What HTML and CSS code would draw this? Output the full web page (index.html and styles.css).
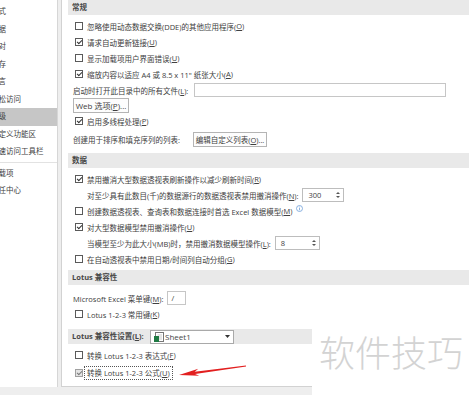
FILE: index.html
```html
<html lang="zh-CN">
<head>
    <meta charset="UTF-8">
    <title>Excel 选项 - 高级</title>
    <link rel="stylesheet" href="styles.css">
</head>
<body>
    <div class="dialog">
        <div class="sidenav">
            <div class="item">公式</div>
            <div class="item">数据</div>
            <div class="item">校对</div>
            <div class="item">保存</div>
            <div class="item">语言</div>
            <div class="item">轻松访问</div>
            <div class="item active">高级</div>
            <div class="item">自定义功能区</div>
            <div class="item">快速访问工具栏</div>
            <div class="sep"></div>
            <div class="item">加载项</div>
            <div class="item">信任中心</div>
        </div>

        <div class="panel">
            <div class="band first">常规</div>
            <div class="row"><span class="cb"></span>忽略使用动态数据交换(DDE)的其他应用程序(<u>O</u>)</div>
            <div class="row"><span class="cb on"></span>请求自动更新链接(<u>U</u>)</div>
            <div class="row"><span class="cb"></span>显示加载项用户界面错误(<u>U</u>)</div>
            <div class="row"><span class="cb on"></span>缩放内容以适应 A4 或 8.5 x 11" 纸张大小(<u>A</u>)</div>
            <div class="row plain">
                <span class="lbl lbl-file">启动时打开此目录中的所有文件(<u>L</u>):</span>
                <span class="field field-file"></span>
            </div>
            <div class="row plain btn-row">
                <span class="btn btn-web">Web 选项(<u>P</u>)...</span>
            </div>
            <div class="row"><span class="cb on"></span>启用多线程处理(<u>P</u>)</div>
            <div class="row plain list-row">
                <span class="lbl lbl-list">创建用于排序和填充序列的列表:</span>
                <span class="btn btn-list">编辑自定义列表(<u>O</u>)...</span>
            </div>

            <div class="band data-band">数据</div>
            <div class="row"><span class="cb on"></span>禁用撤消大型数据透视表刷新操作以减少刷新时间(<u>R</u>)</div>
            <div class="row indent">
                <span class="lbl">对至少具有此数目(千)的数据源行的数据透视表禁用撤消操作(<u>N</u>):</span>
                <span class="spin spin-300"><span>300</span><svg width="4" height="8" viewBox="0 0 4 8"><path d="M0 3 L2 1 L4 3 Z M0 5 L2 7 L4 5 Z" fill="#555"/></svg></span>
            </div>
            <div class="row"><span class="cb"></span>创建数据透视表、查询表和数据连接时首选 Excel 数据模型(<u>M</u>)
                <svg class="info" width="7" height="7" viewBox="0 0 7 7"><circle cx="3.5" cy="3.5" r="3" fill="none" stroke="#6f9fd8" stroke-width="0.8"/><rect x="3.1" y="3" width="0.8" height="2.3" fill="#6f9fd8"/><rect x="3.1" y="1.6" width="0.8" height="0.8" fill="#6f9fd8"/></svg>
            </div>
            <div class="row"><span class="cb on"></span>对大型数据模型禁用撤消操作(<u>U</u>)</div>
            <div class="row indent">
                <span class="lbl">当模型至少为此大小(MB)时，禁用撤消数据模型操作(<u>L</u>):</span>
                <span class="spin spin-8"><span>8</span><svg width="4" height="8" viewBox="0 0 4 8"><path d="M0 3 L2 1 L4 3 Z M0 5 L2 7 L4 5 Z" fill="#555"/></svg></span>
            </div>
            <div class="row"><span class="cb"></span>在自动透视表中禁用日期/时间列自动分组(<u>G</u>)</div>

            <div class="band lotus-band">Lotus 兼容性</div>
            <div class="row plain menu-row">
                <span class="lbl">Microsoft Excel 菜单键(<u>M</u>):</span>
                <span class="field field-key">/</span>
            </div>
            <div class="row"><span class="cb"></span>Lotus 1-2-3 常用键(<u>K</u>)</div>

            <div class="band lotus-set">
                <span class="lbl lbl-set">Lotus 兼容性设置(<u>L</u>):</span>
                <span class="combo">
                    <svg class="sheet" width="10" height="10" viewBox="0 0 10 10"><rect x="1.5" y="0.5" width="8" height="9" fill="#fff" stroke="#777"/><path d="M3.5 3 H8 M3.5 5 H8 M3.5 7 H8" stroke="#aaa" stroke-width="0.6"/><rect x="0" y="4" width="5" height="6" fill="#1f7a43"/></svg>
                    <span class="combo-text">Sheet1</span>
                    <svg width="5" height="3" viewBox="0 0 5 3"><path d="M0 0 L5 0 L2.5 3 Z" fill="#333"/></svg>
                </span>
            </div>
            <div class="row"><span class="cb"></span>转换 Lotus 1-2-3 表达式(<u>F</u>)</div>
            <div class="row last"><span class="cb on dim"></span><span class="focus">转换 Lotus 1-2-3 公式(<u>U</u>)</span></div>
        </div>
    </div>

    <div class="watermark">软件技巧</div>

    <svg class="arrow" width="469" height="395" viewBox="0 0 469 395">
        <polygon points="179,375 199.3,375.8 195.1,374.1 246.1,366.5 245.9,365.5 194.7,371.7 198.3,368.8" fill="#e21f1f"/>
    </svg>
</body>
</html>
```

FILE: styles.css
```css
* {
  box-sizing: border-box;
}

body {
  margin: 0;
  width: 469px;
  height: 395px;
  overflow: hidden;
  position: relative;
  background-color: #eeeeee;
  font-family: "Open Sans", "Noto Sans CJK SC", sans-serif;
  font-size: 7.5px;
  color: #404040;
}

u {
  text-decoration: underline;
}

.dialog {
  display: flex;
  height: 387px;
}

/* left list */
.sidenav {
  flex: none;
  width: 58px;
  background-color: #fff;
  border-right: 1px solid #d6d6d6;
  overflow: hidden;
  padding-top: 3px;
}

.sidenav .item {
  height: 17.5px;
  line-height: 17.5px;
  text-indent: -9px;
  white-space: nowrap;
  font-size: 7.5px;
}

.sidenav .active {
  background-color: #c6c6c6;
}

.sidenav .sep {
  border-top: 1px solid #e2e2e2;
  margin: 1px 0 2px;
}

/* right panel */
.panel {
  flex: 1;
  margin-left: 3px;
  background-color: #fff;
  border-left: 1px solid #d2d2d2;
  border-bottom: 1px solid #d2d2d2;
  padding-left: 6px;
  overflow: hidden;
}

.band {
  height: 15px;
  line-height: 15px;
  background-color: #e9e9e9;
  padding-left: 4px;
  font-weight: bold;
  color: #474747;
  white-space: nowrap;
}

.band.first {
  margin-bottom: 3px;
}

.data-band {
  margin-top: 6px;
  margin-bottom: 3px;
}

.lotus-band {
  margin-top: 3px;
  margin-bottom: 5px;
}

.lotus-set {
  margin-top: 7px;
  margin-bottom: 3px;
  display: flex;
  align-items: center;
}

.row {
  height: 16px;
  display: flex;
  align-items: center;
  padding-left: 7px;
  white-space: nowrap;
}

.row.plain {
  padding-left: 5px;
}

.row.indent {
  padding-left: 19px;
}

.row.last {
  margin-top: 2px;
}

.cb {
  flex: none;
  position: relative;
  width: 8px;
  height: 8px;
  margin-right: 4px;
  border: 1px solid #5a5a5a;
  background-color: #fff;
}

.cb.on::after {
  content: '';
  position: absolute;
  left: 2px;
  top: 0;
  width: 2px;
  height: 4px;
  border: solid #333;
  border-width: 0 1px 1px 0;
  transform: rotate(45deg);
}

.cb.dim {
  border-color: #a0a0a0;
  background-color: #e4e4e4;
}

.cb.dim::after {
  border-color: #7a7a7a;
}

.lbl-file {
  width: 121px;
}

.lbl-list {
  width: 120px;
}

.lbl-set {
  width: 78px;
}

.field {
  height: 14px;
  border: 1px solid #c6c6c6;
  background-color: #fff;
}

.field-file {
  width: 252px;
}

.field-key {
  width: 19px;
  margin-left: 4px;
  padding-left: 3px;
  line-height: 12px;
}

.menu-row {
  padding-left: 3px;
}

.btn-row {
  height: 15px;
  margin-top: 0;
  padding-left: 9px;
}

.list-row {
  height: 15px;
  margin-top: 3px;
}

.btn {
  height: 15px;
  display: flex;
  align-items: center;
  justify-content: center;
  border: 1px solid #b4b4b4;
  background-color: #fdfdfd;
}

.btn-web {
  width: 56px;
  font-size: 8px;
}

.btn-list {
  width: 74px;
}

.spin {
  height: 14px;
  margin-left: 4px;
  display: flex;
  align-items: center;
  justify-content: space-between;
  padding: 0 3px 0 5px;
  border: 1px solid #bdbdbd;
  background-color: #fff;
}

.spin-300 {
  width: 42px;
}

.spin-8 {
  width: 45px;
}

.info {
  margin-left: 4px;
  margin-top: -5px;
}

.combo {
  width: 84px;
  height: 14px;
  display: flex;
  align-items: center;
  padding: 0 3px 0 3px;
  border: 1px solid #a9a9a9;
  background-color: #fff;
  font-weight: normal;
}

.combo-text {
  flex: 1;
  margin-left: 1px;
  font-size: 8px;
}

.focus {
  border: 1px dotted #555;
  padding: 0 2px;
  line-height: 12px;
  margin-left: -3px;
}

/* watermark over the corner */
.watermark {
  position: absolute;
  left: 312px;
  top: 305px;
  width: 157px;
  height: 90px;
  background-color: #fff;
  color: #d3d3d3;
  font-family: "Noto Sans CJK SC", sans-serif;
  font-weight: 300;
  font-size: 36px;
  padding-left: 7px;
  padding-top: 22px;
  line-height: 48px;
  white-space: nowrap;
}

.arrow {
  position: absolute;
  left: 0;
  top: 0;
}
```
